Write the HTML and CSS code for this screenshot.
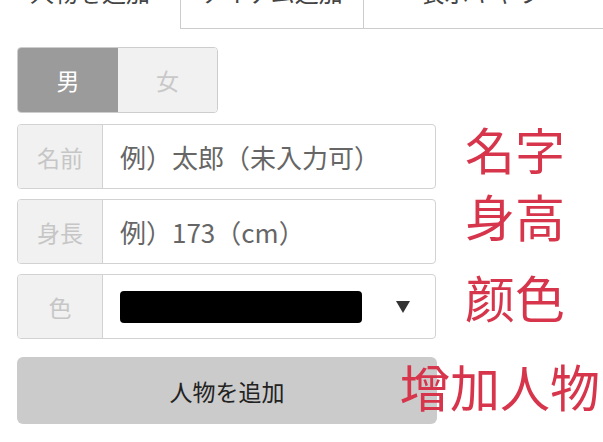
FILE: index.html
```html
<!DOCTYPE html>
<html lang="ja">
<head>
<meta charset="utf-8">
<link rel="stylesheet" href="styles.css">
</head>
<body>
<div class="page">
  <nav class="tabs">
    <div class="tab active">人物を追加</div>
    <div class="tab">アイテム追加</div>
    <div class="tab last">表示キャラ</div>
  </nav>
  <form class="form">
    <div class="row">
      <div class="toggle">
        <span class="seg on">男</span>
        <span class="seg">女</span>
      </div>
    </div>
    <div class="row">
      <div class="group">
        <span class="addon">名前</span>
        <span class="field">例）太郎（未入力可）</span>
      </div>
      <span class="note note-name">名字</span>
    </div>
    <div class="row">
      <div class="group">
        <span class="addon">身長</span>
        <span class="field">例）173（cm）</span>
      </div>
      <span class="note note-height">身高</span>
    </div>
    <div class="row">
      <div class="group">
        <span class="addon">色</span>
        <span class="field select">
          <span class="swatch"></span>
          <svg class="caret" width="14" height="12" viewBox="0 0 14 12"><path d="M0 0H14L7 12Z" fill="#333"/></svg>
        </span>
      </div>
      <span class="note note-color">颜色</span>
    </div>
    <div class="row row-btn">
      <button type="button" class="btn">人物を追加</button>
      <span class="note note-add">增加人物</span>
    </div>
  </form>
</div>
</body>
</html>
```
FILE: styles.css
```css
html, body {
  margin: 0;
  padding: 0;
  background: #fff;
  overflow: hidden;
}
body {
  font-family: "Noto Sans CJK JP", "Noto Sans", sans-serif;
  width: 603px;
  height: 442px;
}
.page {
  display: flex;
  flex-direction: column;
}
.tabs {
  display: grid;
  grid-template-columns: 180px 183px 1fr;
  margin-top: -26px;
}
.tab {
  font-size: 24px;
  line-height: 36px;
  padding-bottom: 18px;
  text-align: center;
  color: #444;
  border-bottom: 1px solid #ccc;
  border-left: 1px solid #ccc;
}
.tab.active {
  border-left: none;
  border-bottom-color: transparent;
}
.tab.last {
  padding-right: 6px;
}
.form {
  display: flex;
  flex-direction: column;
  padding: 18px 0 0 17px;
  margin: 0;
}
.row {
  display: flex;
  align-items: center;
  margin-bottom: 10px;
}
.row-btn {
  margin-top: 8px;
}
.toggle {
  display: flex;
  width: 201px;
  height: 66px;
  box-sizing: border-box;
  border: 1px solid #cdcdcd;
  border-radius: 4px;
  overflow: hidden;
  margin-bottom: 1px;
}
.seg {
  flex: 1;
  display: flex;
  align-items: center;
  justify-content: center;
  font-size: 23px;
  background: #f1f1f1;
  color: #c8c8c8;
}
.seg.on {
  flex: 0 0 100px;
  background: #9b9b9b;
  color: #fff;
}
.group {
  display: flex;
  width: 419px;
  height: 65px;
  box-sizing: border-box;
  border: 1px solid #d2d2d2;
  border-radius: 4px;
  overflow: hidden;
}
.addon {
  flex: 0 0 84px;
  display: flex;
  align-items: center;
  justify-content: center;
  background: #f1f1f1;
  border-right: 1px solid #d2d2d2;
  color: #c6c6c6;
  font-size: 23px;
}
.field {
  flex: 1;
  display: flex;
  align-items: center;
  padding-left: 17px;
  font-size: 26px;
  color: #666;
}
.field.select {
  padding-right: 25px;
  justify-content: space-between;
}
.swatch {
  width: 242px;
  height: 32px;
  background: #000;
  border-radius: 4px;
}
.caret {
  display: block;
}
.btn {
  width: 420px;
  height: 67px;
  border: none;
  border-radius: 6px;
  background: #cbcbcb;
  color: #222;
  font-family: "Noto Sans CJK JP", "Noto Sans", sans-serif;
  font-size: 23px;
  padding: 0;
}
.note {
  font-family: "Noto Sans CJK SC", "Noto Sans", sans-serif;
  color: #d6354b;
  font-size: 50px;
  line-height: 1;
  margin-left: 29px;
}
.note-name { margin-top: -18px; }
.note-height { margin-top: -33px; }
.note-color { margin-top: -21px; }
.note-add {
  margin-left: -37px;
  margin-top: -12px;
}
```
